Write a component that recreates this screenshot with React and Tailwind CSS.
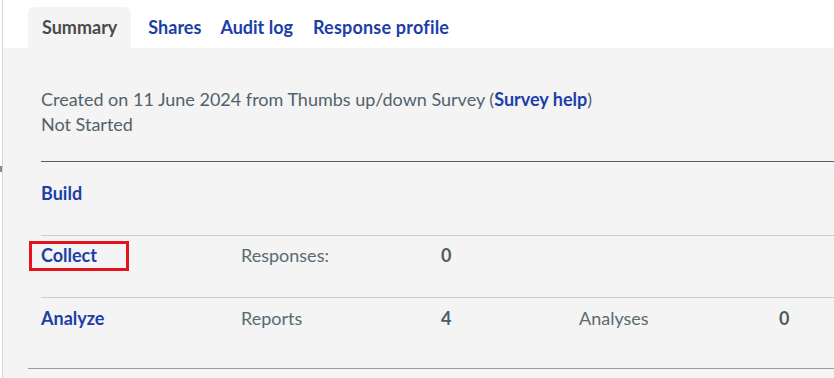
import React from 'react';

const blue = 'text-[#1c3ea8]';

function Row({ label, boxed, cells, className }) {
  return (
    <div className={`grid grid-cols-[200px_200px_138px_200px_1fr] leading-[24px] ${className}`}>
      <div>
        <a href="#" className={`relative font-bold ${blue}`}>
          {label}
          {boxed && (
            <span className="absolute left-[-12px] top-[-3px] w-[100px] h-[30px] border-[3px] border-[#e5141c]" />
          )}
        </a>
      </div>
      {cells.map((c, i) => (
        <div key={i} className={i % 2 === 1 ? 'font-bold text-[#4d5d65]' : 'text-[#5a6a72]'}>
          {c}
        </div>
      ))}
    </div>
  );
}

export default function App() {
  return (
    <div
      className="w-[834px] h-[378px] overflow-hidden bg-white flex text-[18px]"
      style={{ fontFamily: 'Lato, "Open Sans", sans-serif' }}
    >
      {/* left frame edge */}
      <div className="relative w-[3px] shrink-0 border-r border-[#d6d6d6]">
        <span className="absolute left-0 top-[166px] w-[2px] h-[6px] bg-[#8a8a8a]" />
      </div>

      <div className="flex-1 flex flex-col">
        {/* tabs */}
        <nav className="h-[48px] flex items-end pl-[25px] font-bold">
          <div className="h-[41px] px-[14px] pt-[7px] rounded-t-md bg-[#f4f4f4] text-[#4b4b4b]">Summary</div>
          <a href="#" className={`h-[41px] pt-[7px] ml-[17px] ${blue}`}>Shares</a>
          <a href="#" className={`h-[41px] pt-[7px] ml-[19px] ${blue}`}>Audit log</a>
          <a href="#" className={`h-[41px] pt-[7px] ml-[20px] tracking-[0.2px] ${blue}`}>Response profile</a>
        </nav>

        <main className="flex-1 bg-[#f4f4f4] pl-[25px]">
          <div className="pl-[13px] pt-[39px] text-[#52626a] leading-[25px]">
            <p>
              Created on 11 June 2024 from Thumbs up/down Survey (
              <a href="#" className={`font-bold ${blue}`}>Survey help</a>)
            </p>
            <p>Not Started</p>
          </div>

          <div className="ml-[13px] mt-[24px] border-t border-[#4f6068]">
            <Row label="Build" cells={[]} className="pt-[19px] pb-[30px] border-b border-[#cdcdcd]" />
            <Row label="Collect" boxed cells={['Responses:', '0']} className="pt-[7px] pb-[30px] border-b border-[#cdcdcd]" />
            <Row label="Analyze" cells={['Reports', '4', 'Analyses', '0']} className="pt-[8px] pb-[38px]" />
          </div>
          <div className="border-t border-[#9c9c9c]" />
        </main>
      </div>
    </div>
  );
}
